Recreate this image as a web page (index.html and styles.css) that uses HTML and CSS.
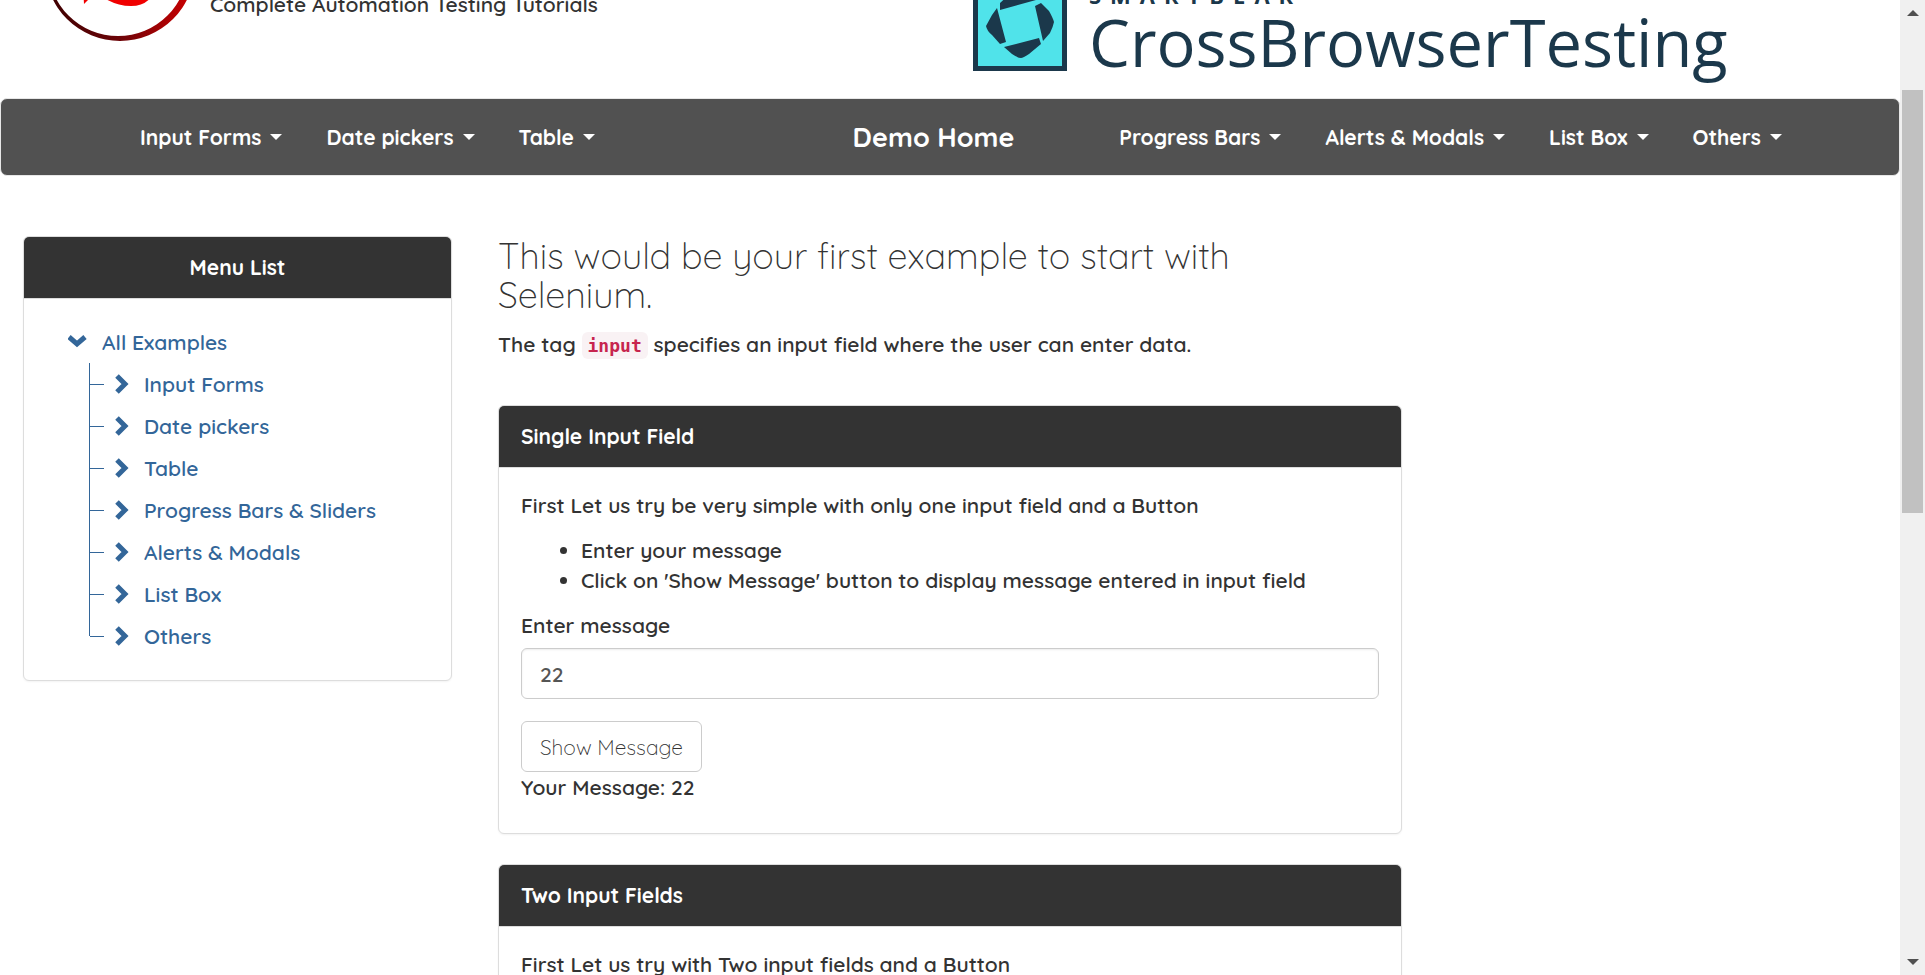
FILE: index.html
```html
<!DOCTYPE html>
<html lang="en">
<head>
<meta charset="utf-8">
<title>Selenium Easy Demo - Simple Form</title>
<link rel="stylesheet" href="styles.css">
</head>
<body>
<div class="page">
  <header class="banner">
    <div class="brand">
      <svg class="brand-logo" viewBox="0 0 150 150" aria-hidden="true">
        <defs><linearGradient id="ring" x1="0" x2="1"><stop offset="0" stop-color="#3a0000"/><stop offset=".5" stop-color="#6d0408"/><stop offset="1" stop-color="#d00000"/></linearGradient></defs>
        <path fill="url(#ring)" fill-rule="evenodd" d="M75 0a75 75 0 1 1 0 150a75 75 0 0 1 0-150zM73 5a70 70 0 1 0 0 140a70 70 0 0 0 0-140z"/>
        <path fill="#f00000" d="M36 60L39 113L45 107Q52 103 59 107Q72 115 86 115Q100 115 107 105L110 60z"/>
      </svg>
      <p class="tagline">Complete Automation Testing Tutorials</p>
    </div>
    <a class="sponsor" href="#">
      <svg class="sponsor-logo" viewBox="0 0 94 94" aria-hidden="true">
        <path fill="#1b384b" d="M0 0h94v94H0z"/>
        <path fill="#50e3ea" d="M5 5h84v84H5z"/>
        <path fill="#1b384b" d="M24 31L19 38L13 49Q14 54 19 58L27 67L33 65zM31 70L66 61L68 67L56 77Q50 81 48 81Q45 81 39 77zM62 29L68 26L76 34Q80 41 81 45Q80 50 77 56L70 64zM27 33L27 26L38 16Q44 12 48 11Q52 13 57 16L63 23z"/>
      </svg>
      <span class="sponsor-text"><span class="sponsor-owner">SMARTBEAR</span><span class="sponsor-name">CrossBrowserTesting</span></span>
    </a>
  </header>

  <nav class="navbar">
    <ul class="nav-group">
      <li><a href="#">Input Forms <i class="caret"></i></a></li>
      <li><a href="#">Date pickers <i class="caret"></i></a></li>
      <li><a href="#">Table <i class="caret"></i></a></li>
    </ul>
    <a class="nav-home" href="#">Demo Home</a>
    <ul class="nav-group nav-right">
      <li><a href="#">Progress Bars <i class="caret"></i></a></li>
      <li><a href="#">Alerts &amp; Modals <i class="caret"></i></a></li>
      <li><a href="#">List Box <i class="caret"></i></a></li>
      <li><a href="#">Others <i class="caret"></i></a></li>
    </ul>
  </nav>

  <div class="columns">
    <aside class="sidebar">
      <section class="panel">
        <h2 class="panel-heading centered">Menu List</h2>
        <div class="tree">
          <a class="tree-root" href="#"><svg class="chevron" viewBox="0 0 20 20" aria-hidden="true"><path d="M1 5L9 12L17 5"/></svg>All Examples</a>
          <ul class="tree-list">
            <li><a href="#"><svg class="chevron" viewBox="0 0 20 20" aria-hidden="true"><path d="M3 2L11 10L3 18"/></svg>Input Forms</a></li>
            <li><a href="#"><svg class="chevron" viewBox="0 0 20 20" aria-hidden="true"><path d="M3 2L11 10L3 18"/></svg>Date pickers</a></li>
            <li><a href="#"><svg class="chevron" viewBox="0 0 20 20" aria-hidden="true"><path d="M3 2L11 10L3 18"/></svg>Table</a></li>
            <li><a href="#"><svg class="chevron" viewBox="0 0 20 20" aria-hidden="true"><path d="M3 2L11 10L3 18"/></svg>Progress Bars &amp; Sliders</a></li>
            <li><a href="#"><svg class="chevron" viewBox="0 0 20 20" aria-hidden="true"><path d="M3 2L11 10L3 18"/></svg>Alerts &amp; Modals</a></li>
            <li><a href="#"><svg class="chevron" viewBox="0 0 20 20" aria-hidden="true"><path d="M3 2L11 10L3 18"/></svg>List Box</a></li>
            <li><a href="#"><svg class="chevron" viewBox="0 0 20 20" aria-hidden="true"><path d="M3 2L11 10L3 18"/></svg>Others</a></li>
          </ul>
        </div>
      </section>
    </aside>

    <main class="content">
      <h1 class="title">This would be your first example to start with <br>Selenium.</h1>
      <p class="lead">The tag <code>input</code> specifies an input field where the user can enter data.</p>

      <section class="panel">
        <h2 class="panel-heading">Single Input Field</h2>
        <div class="panel-body">
          <p>First Let us try be very simple with only one input field and a Button</p>
          <ul class="steps">
            <li>Enter your message</li>
            <li>Click on 'Show Message' button to display message entered in input field</li>
          </ul>
          <form class="form">
            <label for="user-message">Enter message</label>
            <input class="field" id="user-message" type="text" value="22">
            <button class="button" type="button">Show Message</button>
          </form>
          <div class="result">Your Message: <span>22</span></div>
        </div>
      </section>

      <section class="panel">
        <h2 class="panel-heading">Two Input Fields</h2>
        <div class="panel-body">
          <p>First Let us try with Two input fields and a Button</p>
        </div>
      </section>
    </main>
  </div>
</div>
<div class="scrollbar" aria-hidden="true">
  <i class="arrow up"></i>
  <div class="track"><div class="thumb"></div></div>
  <i class="arrow down"></i>
</div>
</body>
</html>
```
FILE: styles.css
```css
* { box-sizing: border-box; }

body {
  margin: 0;
  display: flex;
  height: 100vh;
  overflow: hidden;
  background: #fff;
  color: #333;
  font: 600 21px/30px Quicksand, Lato, "Open Sans", sans-serif;
}

a { color: inherit; text-decoration: none; }
ul { margin: 0; padding: 0; list-style: none; }
p { margin: 0 0 15px; }

.page { flex: 1; min-width: 0; overflow: hidden; }

.banner {
  display: grid;
  grid-template-columns: 973fr 927fr;
  grid-template-rows: 98px;
  align-items: end;
  overflow: hidden;
}
.brand { display: flex; align-items: end; gap: 15px; padding: 0 0 57px 45px; }
.brand-logo { width: 150px; height: 150px; flex: none; }
.tagline { margin: 0 0 22px; }
.sponsor { display: flex; align-items: end; gap: 22px; color: #1b384b; font-family: "Open Sans", sans-serif; }
.sponsor-logo { width: 94px; height: 94px; margin-bottom: 27px; flex: none; }
.sponsor-text { display: flex; flex-direction: column; padding-bottom: 21px; }
.sponsor-owner { font-size: 22px; font-weight: 700; line-height: 24px; letter-spacing: 9px; }
.sponsor-name { font-size: 65px; font-weight: 400; line-height: 70px; }

.navbar {
  display: grid;
  grid-template-columns: 735fr auto 790fr;
  align-items: center;
  height: 78px;
  padding: 0 95px 0 117px;
  border: 1px solid #e7e7e7;
  border-radius: 7px;
  background: #515151;
  color: #fff;
  font-weight: 700;
}
.nav-group { display: flex; }
.nav-group a { display: flex; align-items: center; gap: 9px; padding: 0 22px; }
.nav-right { justify-content: end; }
.nav-home { font-size: 27px; }
.caret { border: 6px solid transparent; border-top-color: #fff; border-bottom: 0; }

.columns { display: grid; grid-template-columns: 25% 50%; padding-top: 60px; }
.sidebar, .content { padding: 0 23px; }

.panel {
  margin-bottom: 30px;
  border: 1px solid #ddd;
  border-radius: 6px;
  background: #fff;
  box-shadow: 0 1px 2px rgba(0, 0, 0, .05);
}
.panel-heading {
  margin: 0;
  padding: 15px 22px 16px;
  border-bottom: 1px solid #ddd;
  border-radius: 5px 5px 0 0;
  background: #333;
  color: #fff;
  font-size: 21px;
  font-weight: 700;
}
.centered { text-align: center; }
.panel-body { padding: 22px 22px 31px; }

.tree { padding: 22px 44px 23px; color: #369; line-height: 42px; }
.tree a { display: flex; align-items: center; gap: 14px; }
.chevron { width: 20px; height: 20px; flex: none; fill: none; stroke: currentColor; stroke-width: 5; }
.tree-list { padding-left: 21px; }
.tree-list li { display: flex; align-items: center; border-left: 1px solid #369; }
.tree-list li::before { width: 14px; margin-right: 10px; border-top: 1px solid #369; content: ""; }
.tree-list li:last-child { border-image: linear-gradient(#369 50%, transparent 50%) 1; }
.tree-list a { gap: 10px; }

.title { margin: 0 0 15px; font-size: 36px; font-weight: 300; line-height: 39px; }
.lead { margin-bottom: 46px; }
code {
  padding: 3px 6px;
  border-radius: 6px;
  background: #f9f2f4;
  color: #c7254e;
  font: 600 18px "DejaVu Sans Mono", monospace;
}

.steps { margin-bottom: 15px; padding-left: 60px; list-style: disc; }
.form { display: flex; flex-direction: column; align-items: start; }
.form label { margin-bottom: 8px; }
.field, .button {
  height: 51px;
  padding: 0 18px;
  border: 1px solid #ccc;
  border-radius: 6px;
  background: #fff;
  font: inherit;
}
.field { width: 100%; margin-bottom: 22px; color: #555; box-shadow: inset 0 1px 2px rgba(0, 0, 0, .075); }
.button { color: #333; font-weight: 300; }

.scrollbar { display: flex; flex-direction: column; align-items: center; width: 25px; background: #f0f0f0; }
.arrow { margin: 10px 0; border: 6px solid transparent; }
.up { border-top: 0; border-bottom-color: #505050; }
.down { border-bottom: 0; border-top-color: #505050; }
.track { display: grid; grid-template-rows: 423fr 436fr; flex: 1; width: 21px; padding-top: 64px; }
.thumb { background: #c1c1c1; }
```
